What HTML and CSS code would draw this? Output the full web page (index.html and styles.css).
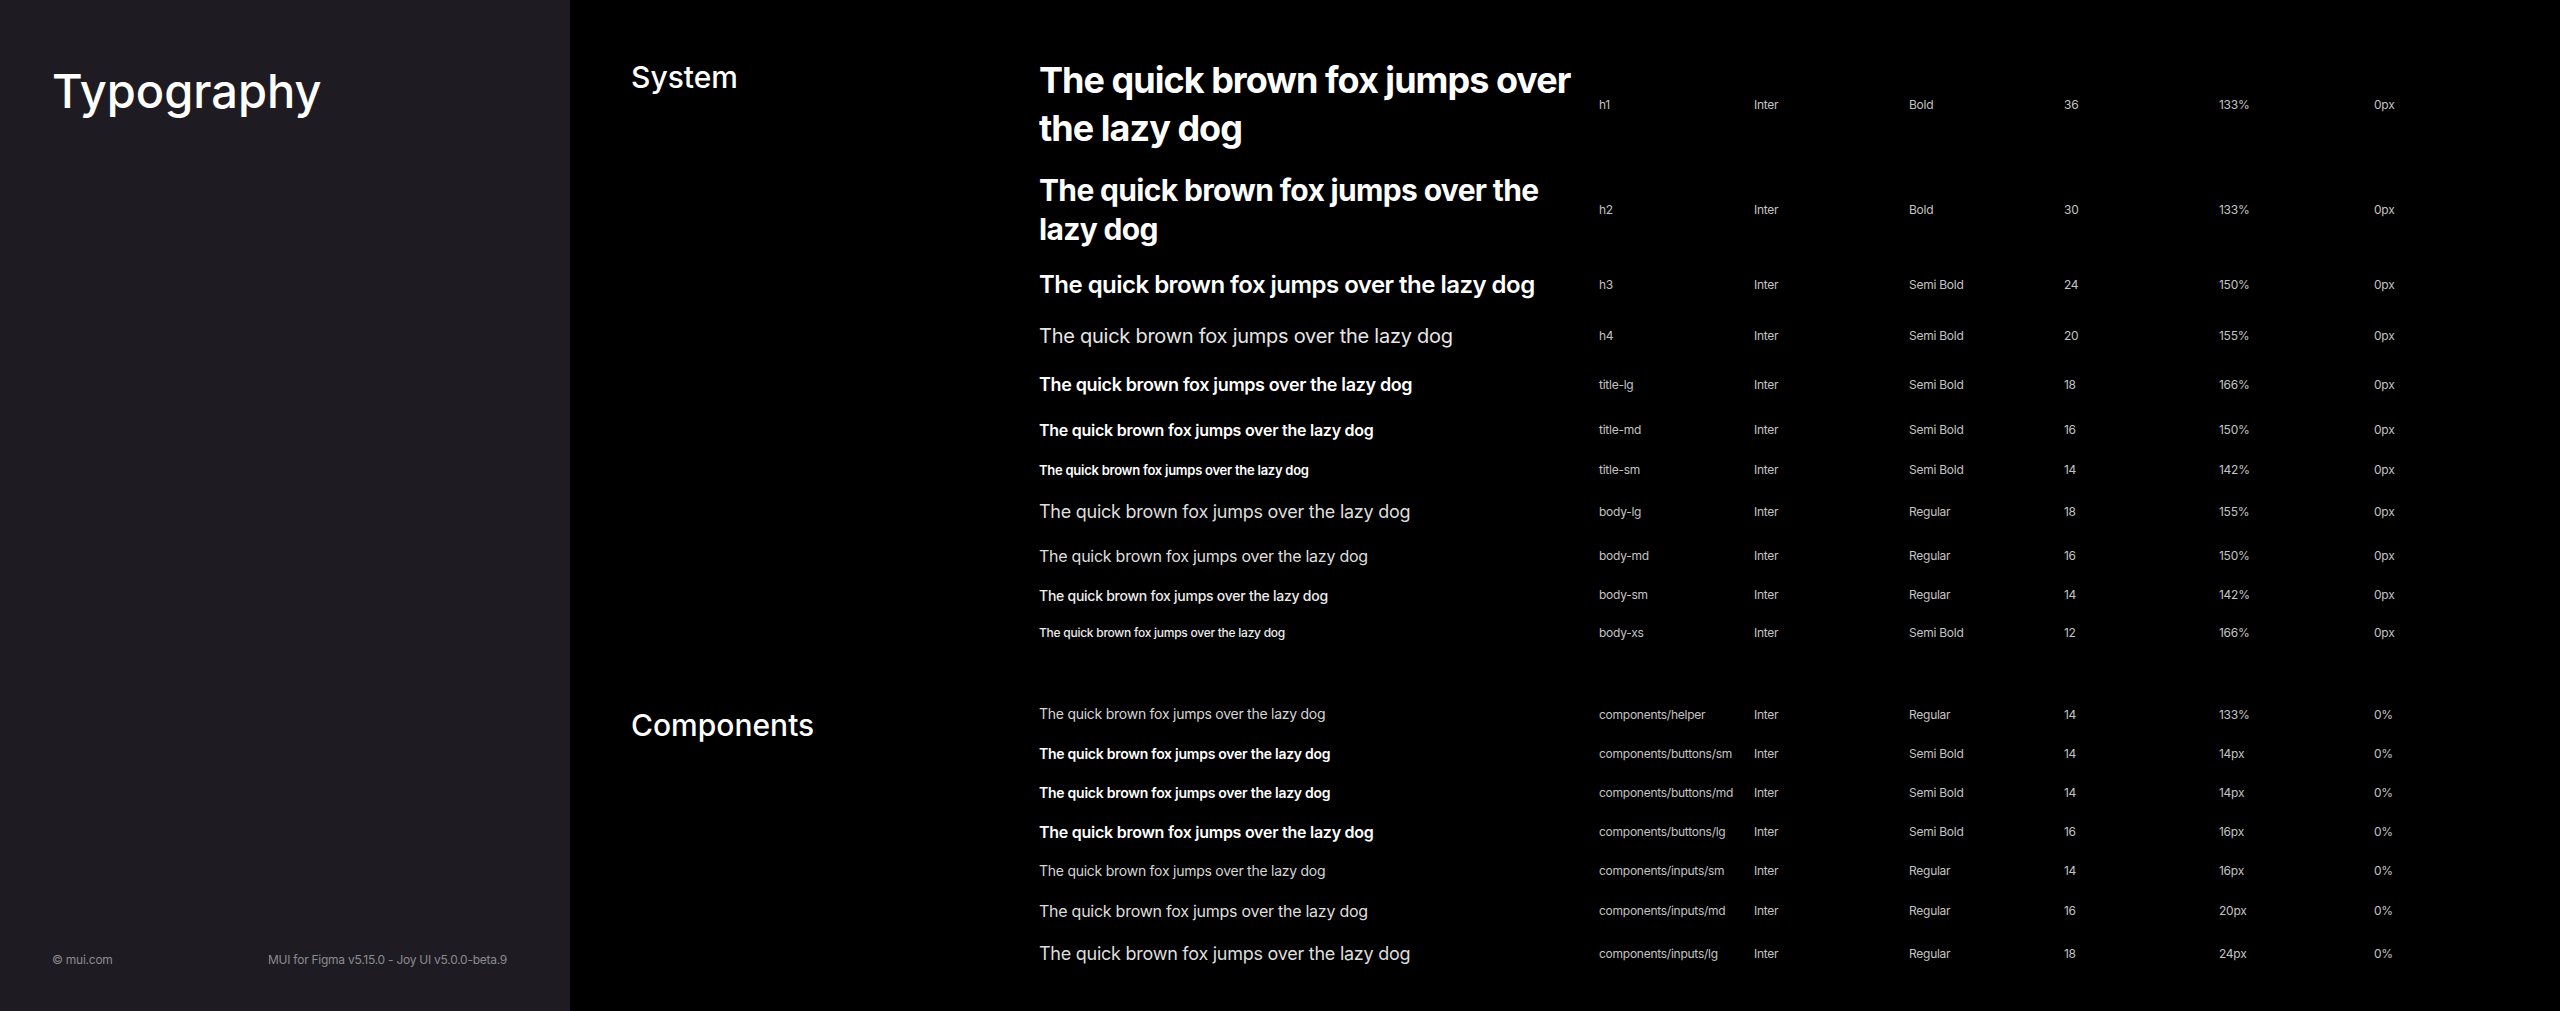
FILE: index.html
```html
<!DOCTYPE html>
<html lang="en">
<head>
  <meta charset="UTF-8">
  <title>Typography</title>
  <meta name="viewport" content="width=device-width, initial-scale=1.0">
  <link rel="stylesheet" href="styles.css">
</head>
<body>

  <aside class="sidebar">
    <h1 class="page-title">Typography</h1>
    <div class="footer">
      <span>© mui.com</span>
      <span>MUI for Figma v5.15.0 - Joy UI v5.0.0-beta.9</span>
    </div>
  </aside>

  <main class="main">

    <section class="group">
      <h2 class="group-title">System</h2>
      <div class="rows">
        <div class="row">
          <p class="sample t-h1">The quick brown fox jumps over the lazy dog</p>
          <span>h1</span><span>Inter</span><span>Bold</span><span>36</span><span>133%</span><span>0px</span>
        </div>
        <div class="row">
          <p class="sample t-h2">The quick brown fox jumps over the lazy dog</p>
          <span>h2</span><span>Inter</span><span>Bold</span><span>30</span><span>133%</span><span>0px</span>
        </div>
        <div class="row">
          <p class="sample t-h3">The quick brown fox jumps over the lazy dog</p>
          <span>h3</span><span>Inter</span><span>Semi Bold</span><span>24</span><span>150%</span><span>0px</span>
        </div>
        <div class="row">
          <p class="sample t-h4">The quick brown fox jumps over the lazy dog</p>
          <span>h4</span><span>Inter</span><span>Semi Bold</span><span>20</span><span>155%</span><span>0px</span>
        </div>
        <div class="row">
          <p class="sample t-title-lg">The quick brown fox jumps over the lazy dog</p>
          <span>title-lg</span><span>Inter</span><span>Semi Bold</span><span>18</span><span>166%</span><span>0px</span>
        </div>
        <div class="row">
          <p class="sample t-title-md">The quick brown fox jumps over the lazy dog</p>
          <span>title-md</span><span>Inter</span><span>Semi Bold</span><span>16</span><span>150%</span><span>0px</span>
        </div>
        <div class="row">
          <p class="sample t-title-sm">The quick brown fox jumps over the lazy dog</p>
          <span>title-sm</span><span>Inter</span><span>Semi Bold</span><span>14</span><span>142%</span><span>0px</span>
        </div>
        <div class="row">
          <p class="sample t-body-lg">The quick brown fox jumps over the lazy dog</p>
          <span>body-lg</span><span>Inter</span><span>Regular</span><span>18</span><span>155%</span><span>0px</span>
        </div>
        <div class="row">
          <p class="sample t-body-md">The quick brown fox jumps over the lazy dog</p>
          <span>body-md</span><span>Inter</span><span>Regular</span><span>16</span><span>150%</span><span>0px</span>
        </div>
        <div class="row">
          <p class="sample t-body-sm">The quick brown fox jumps over the lazy dog</p>
          <span>body-sm</span><span>Inter</span><span>Regular</span><span>14</span><span>142%</span><span>0px</span>
        </div>
        <div class="row">
          <p class="sample t-body-xs">The quick brown fox jumps over the lazy dog</p>
          <span>body-xs</span><span>Inter</span><span>Semi Bold</span><span>12</span><span>166%</span><span>0px</span>
        </div>
      </div>
    </section>

    <section class="group">
      <h2 class="group-title">Components</h2>
      <div class="rows rows-components">
        <div class="row">
          <p class="sample t-helper">The quick brown fox jumps over the lazy dog</p>
          <span>components/helper</span><span>Inter</span><span>Regular</span><span>14</span><span>133%</span><span>0%</span>
        </div>
        <div class="row">
          <p class="sample t-btn-sm">The quick brown fox jumps over the lazy dog</p>
          <span>components/buttons/sm</span><span>Inter</span><span>Semi Bold</span><span>14</span><span>14px</span><span>0%</span>
        </div>
        <div class="row">
          <p class="sample t-btn-md">The quick brown fox jumps over the lazy dog</p>
          <span>components/buttons/md</span><span>Inter</span><span>Semi Bold</span><span>14</span><span>14px</span><span>0%</span>
        </div>
        <div class="row">
          <p class="sample t-btn-lg">The quick brown fox jumps over the lazy dog</p>
          <span>components/buttons/lg</span><span>Inter</span><span>Semi Bold</span><span>16</span><span>16px</span><span>0%</span>
        </div>
        <div class="row">
          <p class="sample t-input-sm">The quick brown fox jumps over the lazy dog</p>
          <span>components/inputs/sm</span><span>Inter</span><span>Regular</span><span>14</span><span>16px</span><span>0%</span>
        </div>
        <div class="row">
          <p class="sample t-input-md">The quick brown fox jumps over the lazy dog</p>
          <span>components/inputs/md</span><span>Inter</span><span>Regular</span><span>16</span><span>20px</span><span>0%</span>
        </div>
        <div class="row">
          <p class="sample t-input-lg">The quick brown fox jumps over the lazy dog</p>
          <span>components/inputs/lg</span><span>Inter</span><span>Regular</span><span>18</span><span>24px</span><span>0%</span>
        </div>
      </div>
    </section>

  </main>

</body>
</html>
```

FILE: styles.css
```css
body {
  font-family: Inter, "Noto Sans", sans-serif;
  letter-spacing: -0.016em;
  background-color: #000;
  color: #fff;
  margin: 0;
  display: flex;
  height: 100vh;
  overflow: hidden;
}

.sidebar {
  width: 570px;
  flex-shrink: 0;
  background-color: #1e1c22;
  box-sizing: border-box;
  padding: 63px 63px 43px 52px;
  display: flex;
  flex-direction: column;
  justify-content: space-between;
}

.page-title {
  margin: 0;
  font-size: 47px;
  font-weight: 500;
  line-height: 1.2;
  letter-spacing: 0;
}

.footer {
  display: flex;
  justify-content: space-between;
  font-size: 12px;
  line-height: 16px;
  color: #8c8b90;
}

.main {
  flex: 1;
  padding: 57px 0 0 61px;
}

.group {
  display: grid;
  grid-template-columns: 408px 1fr;
  margin-bottom: 62px;
}

.group-title {
  margin: 0;
  font-size: 30px;
  font-weight: 500;
  line-height: 40px;
  letter-spacing: 0;
}

.rows {
  display: flex;
  flex-direction: column;
  gap: 18px;
}

.rows-components {
  gap: 21px;
}

.row {
  display: grid;
  grid-template-columns: 560px repeat(6, 155px);
  align-items: center;
  min-height: 18px;
  font-size: 12px;
  line-height: 18px;
  color: #c4c4c4;
}

.sample {
  margin: 0;
  max-width: 545px;
  color: #fff;
}

.t-h1 { font-size: 36px; font-weight: 700; line-height: 1.33; letter-spacing: -0.027em; }
.t-h2 { font-size: 30px; font-weight: 700; line-height: 1.3; letter-spacing: -0.022em; }
.t-h3 { font-size: 24px; font-weight: 600; line-height: 1.5; letter-spacing: -0.022em; }
.t-h4 { font-size: 20px; font-weight: 400; line-height: 1.55; color: #e6e6e6; }
.t-title-lg { font-size: 18px; font-weight: 600; line-height: 1.66; letter-spacing: -0.02em; }
.t-title-md { font-size: 16px; font-weight: 600; line-height: 1.5; }
.t-title-sm { font-size: 13px; font-weight: 600; line-height: 20px; }
.t-body-lg { font-size: 18px; font-weight: 400; line-height: 1.55; color: #dedede; }
.t-body-md { font-size: 16px; font-weight: 400; line-height: 1.5; color: #dedede; }
.t-body-sm { font-size: 14px; font-weight: 500; line-height: 1.42; color: #ececec; }
.t-body-xs { font-size: 12px; font-weight: 500; line-height: 1.66; color: #ececec; }

.t-helper { font-size: 14px; font-weight: 400; line-height: 1.33; color: #d6d6d6; }
.t-btn-sm { font-size: 14px; font-weight: 600; line-height: 14px; }
.t-btn-md { font-size: 14px; font-weight: 600; line-height: 14px; }
.t-btn-lg { font-size: 16px; font-weight: 600; line-height: 16px; }
.t-input-sm { font-size: 14px; font-weight: 400; line-height: 16px; color: #d6d6d6; }
.t-input-md { font-size: 16px; font-weight: 400; line-height: 20px; color: #dedede; }
.t-input-lg { font-size: 18px; font-weight: 400; line-height: 24px; color: #dedede; }
```
